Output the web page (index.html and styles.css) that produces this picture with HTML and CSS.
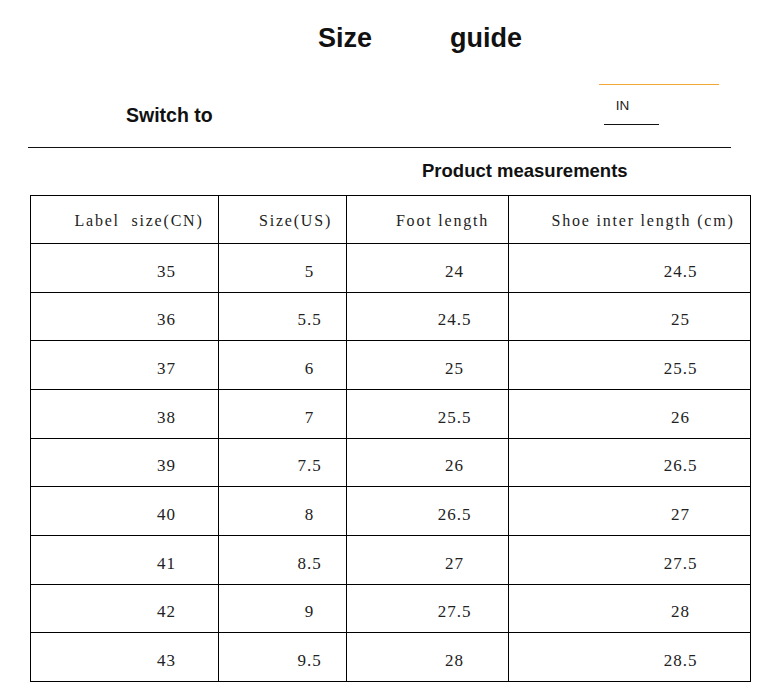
FILE: index.html
```html
<!DOCTYPE html>
<html>
<head>
<meta charset="utf-8">
<link rel="stylesheet" href="styles.css">
</head>
<body>
<div class="page">
  <h1 class="title"><span>Size</span><span>guide</span></h1>
  <div class="switch-row">
    <div class="switch-label">Switch to</div>
    <div class="unit-box">
      <div class="unit">IN</div>
      <div class="unit-line"></div>
    </div>
  </div>
  <div class="rule"></div>
  <h2 class="subtitle">Product measurements</h2>
  <table class="sizes">
    <colgroup>
      <col class="c1"><col class="c2"><col class="c3"><col class="c4">
    </colgroup>
    <thead>
      <tr><th>Label  size(CN)</th><th>Size(US)</th><th>Foot length</th><th>Shoe inter length (cm)</th></tr>
    </thead>
    <tbody>
      <tr><td>35</td><td>5</td><td>24</td><td>24.5</td></tr>
      <tr><td>36</td><td>5.5</td><td>24.5</td><td>25</td></tr>
      <tr><td>37</td><td>6</td><td>25</td><td>25.5</td></tr>
      <tr><td>38</td><td>7</td><td>25.5</td><td>26</td></tr>
      <tr><td>39</td><td>7.5</td><td>26</td><td>26.5</td></tr>
      <tr><td>40</td><td>8</td><td>26.5</td><td>27</td></tr>
      <tr><td>41</td><td>8.5</td><td>27</td><td>27.5</td></tr>
      <tr><td>42</td><td>9</td><td>27.5</td><td>28</td></tr>
      <tr><td>43</td><td>9.5</td><td>28</td><td>28.5</td></tr>
    </tbody>
  </table>
</div>
</body>
</html>
```
FILE: styles.css
```css
html, body {
  margin: 0;
  padding: 0;
  background: #fff;
}
.page {
  width: 781px;
  font-family: "Liberation Sans", Arial, sans-serif;
  color: #111;
}
.title {
  display: flex;
  gap: 78px;
  margin: 22px 0 0 0;
  padding-left: 318px;
  font-size: 27px;
  line-height: 32px;
  font-weight: bold;
}
.switch-row {
  display: flex;
  align-items: flex-start;
  height: 73px;
}
.switch-label {
  margin: 49px 0 0 126px;
  font-size: 19.5px;
  line-height: 24px;
  font-weight: bold;
}
.unit-box {
  margin: 30px 0 0 386px;
  width: 120px;
  border-top: 1px solid #f2a833;
}
.unit {
  margin-top: 13px;
  padding-left: 17px;
  font-size: 13.5px;
  line-height: 16px;
  color: #222;
}
.unit-line {
  margin: 10px 0 0 5px;
  width: 55px;
  height: 0;
  border-top: 1px solid #111;
}
.rule {
  margin: 20px 0 0 28px;
  width: 703px;
  border-top: 1px solid #111;
}
.subtitle {
  margin: 12px 0 0 0;
  padding-left: 422px;
  font-size: 18.5px;
  line-height: 22px;
  font-weight: bold;
}
.sizes {
  margin: 13px 0 0 30px;
  width: 720px;
  table-layout: fixed;
  border-collapse: collapse;
  font-family: "Liberation Serif", "Times New Roman", serif;
  color: #222;
}
.c1 { width: 188px; }
.c2 { width: 128px; }
.c3 { width: 162px; }
.c4 { width: 242px; }
.sizes th, .sizes td {
  border: 1px solid #000;
  padding: 0;
  text-align: center;
  vertical-align: middle;
  white-space: pre;
}
.sizes th {
  font-weight: normal;
  font-size: 16px;
  letter-spacing: 1.8px;
  padding-top: 3px;
}
.sizes thead tr { height: 48px; }
.sizes tbody tr { height: 48.67px; }
.sizes td {
  padding-top: 8px;
  font-size: 17px;
  letter-spacing: 1px;
}
.sizes th:nth-child(1) { padding-left: 29px; }
.sizes th:nth-child(2) { padding-left: 26px; }
.sizes th:nth-child(3) { padding-left: 30px; }
.sizes th:nth-child(4) { padding-left: 27px; }
.sizes td:nth-child(1) { padding-left: 84px; }
.sizes td:nth-child(2) { padding-left: 54px; }
.sizes td:nth-child(3) { padding-left: 54px; }
.sizes td:nth-child(4) { padding-left: 102px; }
```
